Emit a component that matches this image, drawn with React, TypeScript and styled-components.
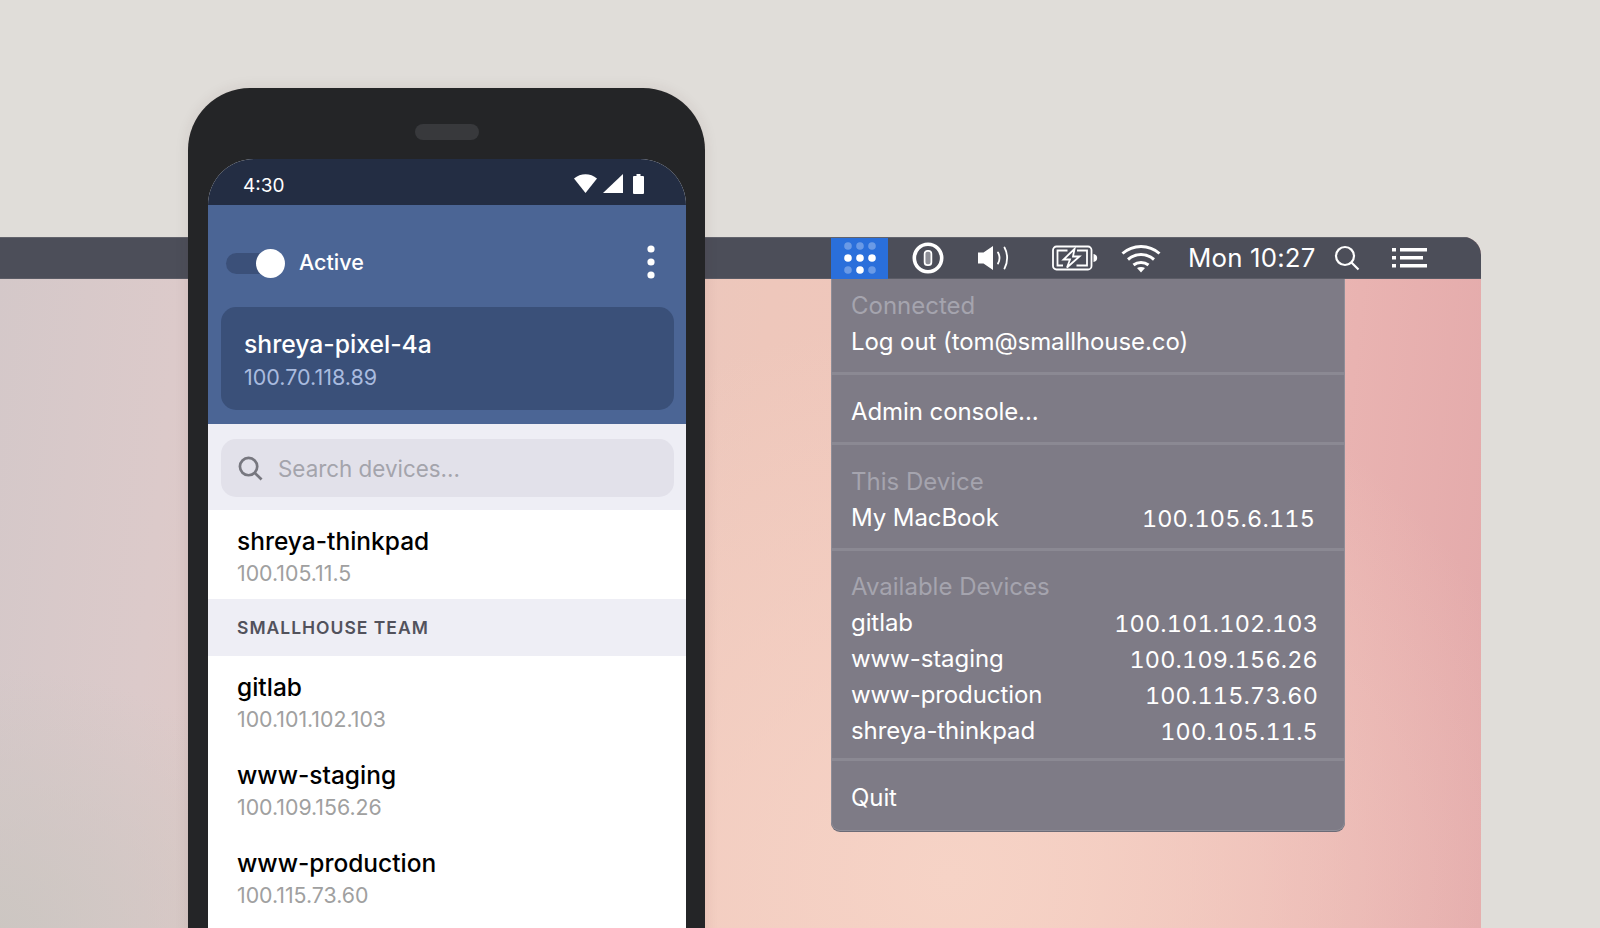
import React from 'react';
import styled, { createGlobalStyle } from 'styled-components';

const GlobalStyle = createGlobalStyle`
  html, body {
    margin: 0;
    padding: 0;
    background: #e0ddd9;
    overflow: hidden;
  }
  * {
    box-sizing: border-box;
  }
`;

const Stage = styled.div`
  position: relative;
  width: 1600px;
  height: 928px;
  padding-top: 237px;
  overflow: hidden;
  font-family: Inter, "Liberation Sans", sans-serif;
`;

const Desktop = styled.div`
  display: flex;
  flex-direction: column;
  width: 1481px;
  height: 691px;
  border-top-right-radius: 18px;
  overflow: hidden;
  background:
    radial-gradient(ellipse 620px 560px at 950px 640px, #f6d3c6 0%, rgba(246, 211, 198, 0) 100%),
    radial-gradient(ellipse 320px 260px at 0px 691px, rgba(203, 198, 193, 0.9) 0%, rgba(203, 198, 193, 0) 100%),
    linear-gradient(96deg, #d4c8c9 0%, #dccaca 12%, #e6c8c1 30%, #eec7bb 50%, #f1c6bb 68%, #e9b3b1 88%, #e3a9aa 100%);
`;

const MenuBar = styled.div`
  display: flex;
  align-items: center;
  height: 42px;
  padding-left: 831px;
  background: #4c4e59;
  border-top: 1px solid #62636c;
  border-bottom: 1px solid #5b5c66;
  color: #fff;
  flex-shrink: 0;
`;

const TrayTile = styled.div`
  position: relative;
  display: flex;
  align-items: center;
  justify-content: center;
  width: 57px;
  height: 41px;
  background: #2a6fdb;
`;

const TrayIcon = styled.div<{ $left: number }>`
  display: flex;
  margin-left: ${p => p.$left}px;
`;

const Clock = styled.div`
  margin-left: 27px;
  font-size: 25.8px;
  line-height: 40px;
  letter-spacing: 0.2px;
  white-space: nowrap;
`;

const Menu = styled.div`
  position: absolute;
  top: 41px;
  left: 0;
  width: 514px;
  background: #7e7b86;
  border: 1px solid #8f8e98;
  border-top: none;
  border-radius: 0 0 9px 9px;
  box-shadow: 0 1px 0 #6c6b76;
  color: #fff;
  font-size: 24px;
  line-height: 36px;
  overflow: hidden;
`;

const MenuSection = styled.div<{ $top: number; $bottom: number; $right?: number }>`
  padding: ${p => p.$top}px ${p => p.$right ?? 27}px ${p => p.$bottom}px 19px;
  border-bottom: 3px solid #8b8993;

  &:last-child {
    border-bottom: none;
  }
`;

const MenuLabel = styled.div`
  color: #a5a4ae;
`;

const MenuRow = styled.div`
  display: flex;
  justify-content: space-between;
  letter-spacing: -0.08px;
  white-space: nowrap;
`;

const MenuIp = styled.span`
  padding-top: 1px;
  font-size: 23.4px;
  line-height: 35px;
  font-variant-numeric: tabular-nums;
  letter-spacing: 0.2px;
`;

const Phone = styled.div`
  position: absolute;
  top: 88px;
  left: 188px;
  width: 517px;
  height: 900px;
  padding: 71px 19px 0 20px;
  background: #242527;
  border-radius: 62px 62px 0 0;
  box-shadow: 0 0 14px rgba(70, 40, 40, 0.1);
`;

const Speaker = styled.div`
  position: absolute;
  top: 36px;
  left: 227px;
  width: 64px;
  height: 16px;
  border-radius: 8px;
  background: #38393c;
`;

const Screen = styled.div`
  height: 100%;
  background: #fff;
  border-radius: 46px 46px 0 0;
  overflow: hidden;
`;

const StatusBar = styled.div`
  display: flex;
  align-items: center;
  justify-content: space-between;
  height: 46px;
  padding: 7px 42px 0 35px;
  background: #232d43;
  color: #fff;
  font-size: 19px;
`;

const StatusIcons = styled.div`
  display: flex;
  align-items: center;
  gap: 6px;
  margin-top: -4px;
`;

const AppHeader = styled.div`
  padding: 0 12px 14px 13px;
  background: #4b6595;
`;

const HeaderRow = styled.div`
  display: flex;
  align-items: center;
  height: 102px;
  padding: 12px 19px 0 5px;
  color: #fff;
`;

const Toggle = styled.div`
  position: relative;
  width: 59px;
  height: 21px;
  margin: 3px 14px 0 0;
  border-radius: 11px;
  background: #3b5079;
`;

const ToggleKnob = styled.div`
  position: absolute;
  top: -4px;
  right: 0;
  width: 29px;
  height: 29px;
  border-radius: 50%;
  background: #fff;
`;

const ActiveLabel = styled.div`
  flex: 1;
  font-size: 21.5px;
  font-weight: 500;
`;

const DeviceCard = styled.div`
  height: 103px;
  padding: 21px 23px;
  border-radius: 15px;
  background: #3a5079;
`;

const CardName = styled.div`
  color: #fff;
  font-size: 24.7px;
  line-height: 32px;
  font-weight: 500;
`;

const CardIp = styled.div`
  margin-top: 1px;
  color: #a9bbdf;
  font-size: 21.5px;
  line-height: 32px;
`;

const SearchBand = styled.div`
  padding: 15px 12px 13px 13px;
  background: #eeeef5;
`;

const SearchBox = styled.div`
  display: flex;
  align-items: center;
  gap: 15px;
  height: 58px;
  padding: 0 17px;
  border-radius: 15px;
  background: #e2e1ea;
  color: #a4a4ac;
  font-size: 22.4px;
`;

const DeviceRow = styled.div<{ $height: number }>`
  height: ${p => p.$height}px;
  padding: 14.5px 29px 0;
`;

const DeviceName = styled.div`
  color: #000;
  font-size: 24.5px;
  line-height: 32px;
  font-weight: 500;
`;

const DeviceIp = styled.div`
  color: #a0a0a0;
  font-size: 21.3px;
  line-height: 32px;
`;

const TeamBand = styled.div`
  display: flex;
  align-items: center;
  height: 57px;
  padding: 0 29px;
  background: #eeeef5;
  color: #52525c;
  font-size: 17.5px;
  font-weight: 600;
  letter-spacing: 1px;
`;

const DotsGrid = () => (
  <svg width="34" height="34" viewBox="0 0 34 34">
    {[0, 1, 2].flatMap(r =>
      [0, 1, 2].map(c => {
        const lit = r === 1 || (r === 2 && c === 1);
        return <circle key={`${r}-${c}`} cx={5 + c * 12} cy={5 + r * 12} r={3.8} fill="#fff" opacity={lit ? 1 : 0.3} />;
      })
    )}
  </svg>
);

const OnePasswordIcon = () => (
  <svg width="32" height="32" viewBox="0 0 32 32" fill="none">
    <circle cx="16" cy="16" r="13.7" stroke="#fff" strokeWidth="3.6" />
    <rect x="12.600" y="8.800" width="6.800" height="14.400" rx="3" fill="#8e8f97" stroke="#fff" strokeWidth="1.700" />
  </svg>
);

const VolumeIcon = () => (
  <svg width="34" height="30" viewBox="0 0 34 30" fill="none">
    <path d="M1 9.500h5.500L16 3v24l-9.500-6.500H1z" fill="#fff" />
    <path d="M21 9.500c1.900 3.400 1.900 7.600 0 11" stroke="#fff" strokeWidth="1.800" strokeLinecap="round" />
    <path d="M27.500 4.500c3.500 6.200 3.500 14.800 0 21" stroke="#fff" strokeWidth="1.800" strokeLinecap="round" />
  </svg>
);

const BatteryIcon = () => (
  <svg width="46" height="26" viewBox="0 0 46 26" fill="none" stroke="#fff" strokeWidth="1.800">
    <rect x="1" y="1.500" width="38.500" height="23" rx="3.500" />
    <path d="M41.500 9c2.200.4 3.700 1.900 3.700 4s-1.500 3.600-3.700 4z" fill="#fff" stroke="none" />
    <path d="M15.500 5.500H5.500v15h5.500" />
    <path d="M25 5.500h10v15H24.500" />
    <path d="M22.500 4 11.500 14.500h6.500L15 22.500 27.500 11.500h-6.500z" fill="#4c4e59" />
  </svg>
);

const WifiIcon = () => (
  <svg width="40" height="30" viewBox="0 0 40 30" fill="none" stroke="#fff" strokeWidth="3" strokeLinecap="butt">
    <path d="M1.500 10.500C12 1 28 1 38.500 10.500" />
    <path d="M7 16.500c7.500-6.600 18.500-6.600 26 0" />
    <path d="M12.500 22c4.300-3.500 10.700-3.500 15 0" />
    <path d="M20 29.500l-4-4.400c2.300-1.500 5.700-1.500 8 0z" fill="#fff" stroke="none" />
  </svg>
);

const MagnifierIcon = ({ size, color, stroke }: { size: number; color: string; stroke: number }) => (
  <svg width={size} height={size} viewBox="0 0 26 26" fill="none" stroke={color} strokeWidth={stroke}>
    <circle cx="11" cy="11" r="9" />
    <path d="M17.500 17.500 24.500 24.500" />
  </svg>
);

const ListIcon = () => (
  <svg width="36" height="22" viewBox="0 0 36 22" fill="#fff">
    <rect x="0" y="1" width="4" height="3.500" />
    <rect x="0" y="9" width="4" height="3.500" />
    <rect x="0" y="17" width="4" height="3.500" />
    <rect x="8" y="1" width="27" height="3.500" />
    <rect x="8" y="9" width="23" height="3.500" />
    <rect x="8" y="17" width="27" height="3.500" />
  </svg>
);

const AndroidWifi = () => (
  <svg width="23" height="19" viewBox="0 0 23 19">
    <path d="M11.500 19 0 4.500C6.500-1.300 16.500-1.300 23 4.500z" fill="#fff" />
  </svg>
);

const AndroidSignal = () => (
  <svg width="20" height="19" viewBox="0 0 20 19">
    <path d="M20 0v19H0z" fill="#fff" />
  </svg>
);

const AndroidBattery = () => (
  <svg width="15" height="20" viewBox="-4 0 15 20">
    <path d="M3.500 0h4v2H10a1 1 0 0 1 1 1v16a1 1 0 0 1-1 1H1a1 1 0 0 1-1-1V3a1 1 0 0 1 1-1h2.500z" fill="#fff" />
  </svg>
);

const KebabIcon = () => (
  <svg width="8" height="34" viewBox="0 0 8 34" fill="#fff">
    <circle cx="4" cy="4" r="3.600" />
    <circle cx="4" cy="17" r="3.600" />
    <circle cx="4" cy="30" r="3.600" />
  </svg>
);

const availableDevices = [
  { name: 'gitlab', ip: '100.101.102.103' },
  { name: 'www-staging', ip: '100.109.156.26' },
  { name: 'www-production', ip: '100.115.73.60' },
  { name: 'shreya-thinkpad', ip: '100.105.11.5' },
];

const App: React.FC = () => (
  <Stage>
    <GlobalStyle />
    <Desktop>
      <MenuBar>
        <TrayTile>
          <DotsGrid />
          <Menu>
            <MenuSection $top={9} $bottom={12}>
              <MenuLabel>Connected</MenuLabel>
              <MenuRow>Log out (tom@smallhouse.co)</MenuRow>
            </MenuSection>
            <MenuSection $top={19} $bottom={12}>
              <MenuRow>Admin console...</MenuRow>
            </MenuSection>
            <MenuSection $top={19} $bottom={12} $right={29}>
              <MenuLabel>This Device</MenuLabel>
              <MenuRow>
                <span>My MacBook</span>
                <MenuIp>100.105.6.115</MenuIp>
              </MenuRow>
            </MenuSection>
            <MenuSection $top={18} $bottom={9} $right={26}>
              <MenuLabel>Available Devices</MenuLabel>
              {availableDevices.map(d => (
                <MenuRow key={d.name}>
                  <span>{d.name}</span>
                  <MenuIp>{d.ip}</MenuIp>
                </MenuRow>
              ))}
            </MenuSection>
            <MenuSection $top={19} $bottom={14}>
              <MenuRow>Quit</MenuRow>
            </MenuSection>
          </Menu>
        </TrayTile>
        <TrayIcon $left={24}><OnePasswordIcon /></TrayIcon>
        <TrayIcon $left={33}><VolumeIcon /></TrayIcon>
        <TrayIcon $left={41}><BatteryIcon /></TrayIcon>
        <TrayIcon $left={23}><WifiIcon /></TrayIcon>
        <Clock>Mon 10:27</Clock>
        <TrayIcon $left={18}><MagnifierIcon size={26} color="#fff" stroke={2.2} /></TrayIcon>
        <TrayIcon $left={32}><ListIcon /></TrayIcon>
      </MenuBar>
    </Desktop>

    <Phone>
      <Speaker />
      <Screen>
        <StatusBar>
          <span>4:30</span>
          <StatusIcons>
            <AndroidWifi />
            <AndroidSignal />
            <AndroidBattery />
          </StatusIcons>
        </StatusBar>
        <AppHeader>
          <HeaderRow>
            <Toggle><ToggleKnob /></Toggle>
            <ActiveLabel>Active</ActiveLabel>
            <KebabIcon />
          </HeaderRow>
          <DeviceCard>
            <CardName>shreya-pixel-4a</CardName>
            <CardIp>100.70.118.89</CardIp>
          </DeviceCard>
        </AppHeader>
        <SearchBand>
          <SearchBox>
            <MagnifierIcon size={25} color="#77777f" stroke={2.8} />
            Search devices...
          </SearchBox>
        </SearchBand>
        <DeviceRow $height={89}>
          <DeviceName>shreya-thinkpad</DeviceName>
          <DeviceIp>100.105.11.5</DeviceIp>
        </DeviceRow>
        <TeamBand>SMALLHOUSE TEAM</TeamBand>
        <DeviceRow $height={88}>
          <DeviceName>gitlab</DeviceName>
          <DeviceIp>100.101.102.103</DeviceIp>
        </DeviceRow>
        <DeviceRow $height={88}>
          <DeviceName>www-staging</DeviceName>
          <DeviceIp>100.109.156.26</DeviceIp>
        </DeviceRow>
        <DeviceRow $height={88}>
          <DeviceName>www-production</DeviceName>
          <DeviceIp>100.115.73.60</DeviceIp>
        </DeviceRow>
      </Screen>
    </Phone>
  </Stage>
);

export default App;
